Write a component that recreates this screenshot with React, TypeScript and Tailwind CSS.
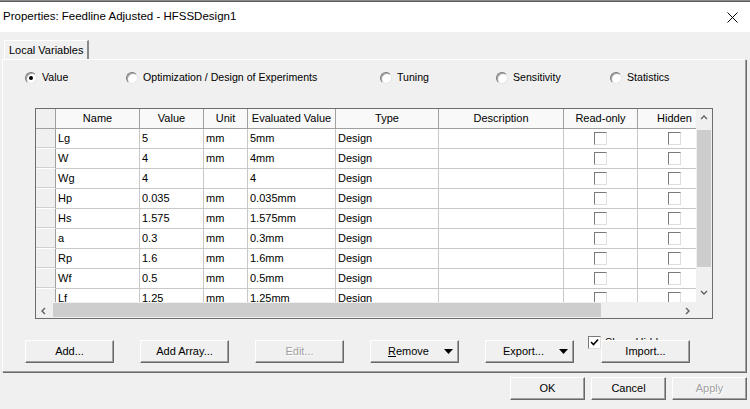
import { ReactNode } from "react";

const font = "font-['Liberation_Sans','Arial',sans-serif]";

const cols = [
  { name: "Name", w: 84 },
  { name: "Value", w: 64 },
  { name: "Unit", w: 44 },
  { name: "Evaluated Value", w: 88 },
  { name: "Type", w: 103 },
  { name: "Description", w: 125 },
  { name: "Read-only", w: 74 },
  { name: "Hidden", w: 74 },
];

const rows = [
  ["Lg", "5", "mm", "5mm"],
  ["W", "4", "mm", "4mm"],
  ["Wg", "4", "", "4"],
  ["Hp", "0.035", "mm", "0.035mm"],
  ["Hs", "1.575", "mm", "1.575mm"],
  ["a", "0.3", "mm", "0.3mm"],
  ["Rp", "1.6", "mm", "1.6mm"],
  ["Wf", "0.5", "mm", "0.5mm"],
  ["Lf", "1.25", "mm", "1.25mm"],
];

const radios = [
  { label: "Value", w: 101, on: true },
  { label: "Optimization / Design of Experiments", w: 254 },
  { label: "Tuning", w: 116 },
  { label: "Sensitivity", w: 114 },
  { label: "Statistics", w: 120 },
];

const Radio = ({ on }: { on?: boolean }) => (
  <span className="w-[12px] h-[12px] rounded-full bg-white border border-t-[#7a7a7a] border-l-[#7a7a7a] border-r-[#e6e6e6] border-b-[#e6e6e6] shadow-[inset_1px_1px_0_#a0a0a0] flex items-center justify-center">
    {on && <span className="w-[4px] h-[4px] rounded-full bg-black" />}
  </span>
);

const Box = ({ checked }: { checked?: boolean }) => (
  <span className="w-[13px] h-[13px] bg-white border border-t-[#7a7a7a] border-l-[#7a7a7a] border-r-[#dedede] border-b-[#dedede] flex items-center justify-center">
    {checked && (
      <svg width="9" height="8" viewBox="0 0 9 8">
        <path d="M1 4 L3.5 6.5 L8 1.5" stroke="#000" strokeWidth="1.6" fill="none" />
      </svg>
    )}
  </span>
);

const Tri = () => (
  <svg width="9" height="5" viewBox="0 0 9 5">
    <polygon points="0,0 9,0 4.5,5" fill="#000" />
  </svg>
);

const Btn = ({
  children,
  w = 89,
  disabled,
  className = "",
}: {
  children: ReactNode;
  w?: number;
  disabled?: boolean;
  className?: string;
}) => (
  <div
    style={{ width: w }}
    className={`h-[23px] shrink-0 bg-[#f0f0f0] border border-t-white border-l-white border-r-[#696969] border-b-[#696969] shadow-[inset_-1px_-1px_0_#a0a0a0] flex items-center text-[11px] ${
      disabled ? "text-[#a0a0a0] [text-shadow:1px_1px_0_#fff]" : "text-black"
    } ${className}`}
  >
    {children}
  </div>
);

const Chev = ({ dir }: { dir: "up" | "down" | "left" | "right" }) => {
  const d = {
    up: "M1 5 L4 2 L7 5",
    down: "M1 2 L4 5 L7 2",
    left: "M5 1 L2 4 L5 7",
    right: "M2 1 L5 4 L2 7",
  }[dir];
  return (
    <svg width="8" height="8" viewBox="0 0 8 8">
      <path d={d} stroke="#606060" strokeWidth="1.4" fill="none" />
    </svg>
  );
};

const Grid = () => (
  <div className="ml-[32px] mt-[24px] w-[678px] h-[211px] border border-[#6d6d6d] bg-[#f0f0f0] flex flex-col">
    <div className="flex h-[193px]">
      <div className="w-[660px] h-[193px] overflow-hidden bg-white">
        <div className="flex h-[20px] w-max">
          <div className="w-[20px] h-[20px] shrink-0 bg-[#f0f0f0] border-r border-b border-[#a0a0a0]" />
          {cols.map((c) => (
            <div
              key={c.name}
              style={{ width: c.w }}
              className="h-[20px] shrink-0 bg-[#f9f9f9] border-r border-b border-[#a0a0a0] flex items-center justify-center text-[11px] text-black"
            >
              {c.name}
            </div>
          ))}
        </div>
        {rows.map((r) => (
          <div key={r[0]} className="flex h-[20px] w-max">
            <div className="w-[20px] h-[20px] shrink-0 bg-[#f0f0f0] border-r border-r-[#a0a0a0] border-b border-b-white shadow-[inset_0_-1px_0_#d0d0d0]" />
            {cols.map((c, i) => (
              <div
                key={c.name}
                style={{ width: c.w }}
                className={`h-[20px] shrink-0 border-r border-b border-[#c8c8c8] flex items-center text-[11px] text-black ${
                  i >= 6 ? "justify-center" : "pl-[2px]"
                }`}
              >
                {i < 4 ? r[i] : i === 4 ? "Design" : i >= 6 ? <Box /> : null}
              </div>
            ))}
          </div>
        ))}
      </div>
      <div className="w-[16px] h-[193px] bg-[#f0f0f0] flex flex-col items-center">
        <div className="h-[17px] flex items-center justify-center">
          <Chev dir="up" />
        </div>
        <div className="mt-[4px] w-[14px] h-[137px] bg-[#cdcdcd]" />
        <div className="mt-[17px] h-[17px] flex items-center justify-center">
          <Chev dir="down" />
        </div>
      </div>
    </div>
    <div className="flex h-[16px] border-t border-[#f0f0f0]">
      <div className="w-[16px] flex items-center justify-center">
        <Chev dir="left" />
      </div>
      <div className="ml-[1px] w-[548px] h-[14px] bg-[#cdcdcd]" />
      <div className="ml-[79px] w-[16px] flex items-center justify-center">
        <Chev dir="right" />
      </div>
      <div className="w-[16px] bg-[#f0f0f0]" />
    </div>
  </div>
);

export default function App() {
  return (
    <div className={`w-[750px] h-[409px] bg-[#f0f0f0] flex flex-col overflow-hidden ${font}`}>
      <div className="h-[2px] bg-[#8a8a8a] border-b border-[#5a5a5a]" />
      <div className="h-[30px] bg-white flex items-center justify-between pl-[3px] pr-[12px]">
        <span className="text-[11.5px] text-black">Properties: Feedline Adjusted - HFSSDesign1</span>
        <svg width="11" height="11" viewBox="0 0 11 11">
          <path d="M0.5 0.5 L10.5 10.5 M10.5 0.5 L0.5 10.5" stroke="#000" strokeWidth="1" />
        </svg>
      </div>

      <div className="mt-[8px] ml-[4px] w-[85px] h-[19px] border-t border-l border-white border-r-2 border-r-[#8a8a8a] flex items-center pl-[4px] text-[11px] text-black relative z-10 bg-[#f0f0f0]">
        Local Variables
      </div>

      <div className="ml-[2px] w-[744px] h-[313px] border-t border-l border-white border-r border-b border-r-[#a0a0a0] border-b-[#a0a0a0] shadow-[1px_1px_0_#696969] flex flex-col">
        <div className="mt-[11px] ml-[22px] flex h-[14px] items-center text-[10.6px] text-black">
          {radios.map((r) => (
            <div key={r.label} style={{ width: r.w }} className="flex items-center gap-[5px] shrink-0">
              <Radio on={r.on} />
              <span>{r.label}</span>
            </div>
          ))}
        </div>

        <div className="-mt-[1px]">
          <Grid />
        </div>

        <div className="mt-[21px] ml-[22px] flex items-center">
          <Btn className="justify-center">Add...</Btn>
          <Btn className="ml-[26px] justify-center">Add Array...</Btn>
          <Btn className="ml-[26px] justify-center" disabled>
            Edit...
          </Btn>
          <Btn className="ml-[26px] justify-between pl-[17px] pr-[5px]">
            <span>
              <span className="underline">R</span>emove
            </span>
            <Tri />
          </Btn>
          <Btn className="ml-[26px] justify-between pl-[17px] pr-[5px]">
            <span>Export...</span>
            <Tri />
          </Btn>
          <div className="relative ml-[14px] w-[103px] h-[23px]">
            <div className="absolute left-0 top-[-6px] flex items-center gap-[4px] text-[11px] text-black">
              <Box checked />
              <span>Show Hidden</span>
            </div>
            <Btn className="absolute left-[13px] top-0 justify-center">Import...</Btn>
          </div>
        </div>
      </div>

      <div className="mt-[5px] mr-[3px] flex justify-end gap-[6px]">
        <Btn w={75} className="justify-center">OK</Btn>
        <Btn w={75} className="justify-center">Cancel</Btn>
        <Btn w={75} className="justify-center" disabled>
          Apply
        </Btn>
      </div>
    </div>
  );
}
